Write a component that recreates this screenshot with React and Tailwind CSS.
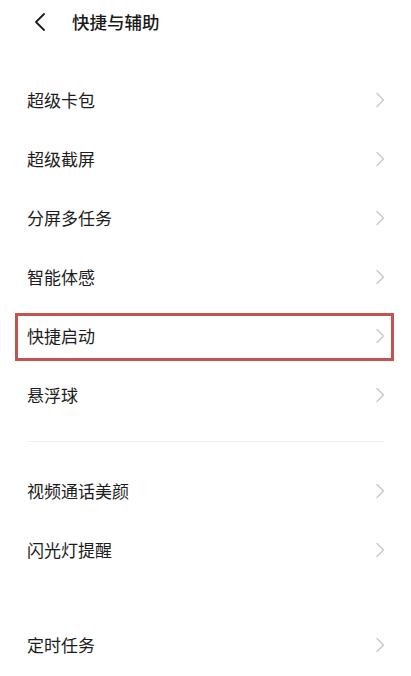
import React from 'react';

const font = { fontFamily: '"Noto Sans CJK SC", "Noto Sans", sans-serif' };

const Chevron = () => (
  <svg width="10" height="16" viewBox="0 0 10 16" fill="none" className="shrink-0">
    <path d="M2 1.5L8.5 8L2 14.5" stroke="#c8c8c8" strokeWidth="1.4" strokeLinecap="round" strokeLinejoin="round" />
  </svg>
);

const Row = ({ label, marked }) => (
  <div className="relative flex h-[59px] items-center justify-between pl-[27px] pr-[26px]">
    <span className="text-[17px] leading-none text-[#1c1c1c]">{label}</span>
    <Chevron />
    {marked && (
      <div className="pointer-events-none absolute left-[15px] right-[17px] top-[7px] bottom-[4px] border-[3px] border-[#c4524f]"></div>
    )}
  </div>
);

export default function App() {
  return (
    <div className="h-[676px] w-[411px] overflow-hidden bg-white" style={font}>
      {/* header */}
      <div className="flex h-[44px] items-center pl-[33px]">
        <svg width="13" height="18" viewBox="0 0 13 18" fill="none">
          <path d="M11 1L3 9L11 17" stroke="#1c1c1c" strokeWidth="1.8" strokeLinecap="round" strokeLinejoin="round" />
        </svg>
        <span className="ml-[26px] text-[17.5px] font-medium leading-none text-[#1a1a1a]">快捷与辅助</span>
      </div>

      <div className="mt-[26px]">
        <Row label="超级卡包" />
        <Row label="超级截屏" />
        <Row label="分屏多任务" />
        <Row label="智能体感" />
        <Row label="快捷启动" marked />
        <Row label="悬浮球" />
      </div>

      <div className="mx-[27px] mt-[17px] h-px bg-[#efefef]"></div>

      <div className="mt-[19px]">
        <Row label="视频通话美颜" />
        <Row label="闪光灯提醒" />
      </div>

      <div className="mt-[36px]">
        <Row label="定时任务" />
      </div>
    </div>
  );
}
